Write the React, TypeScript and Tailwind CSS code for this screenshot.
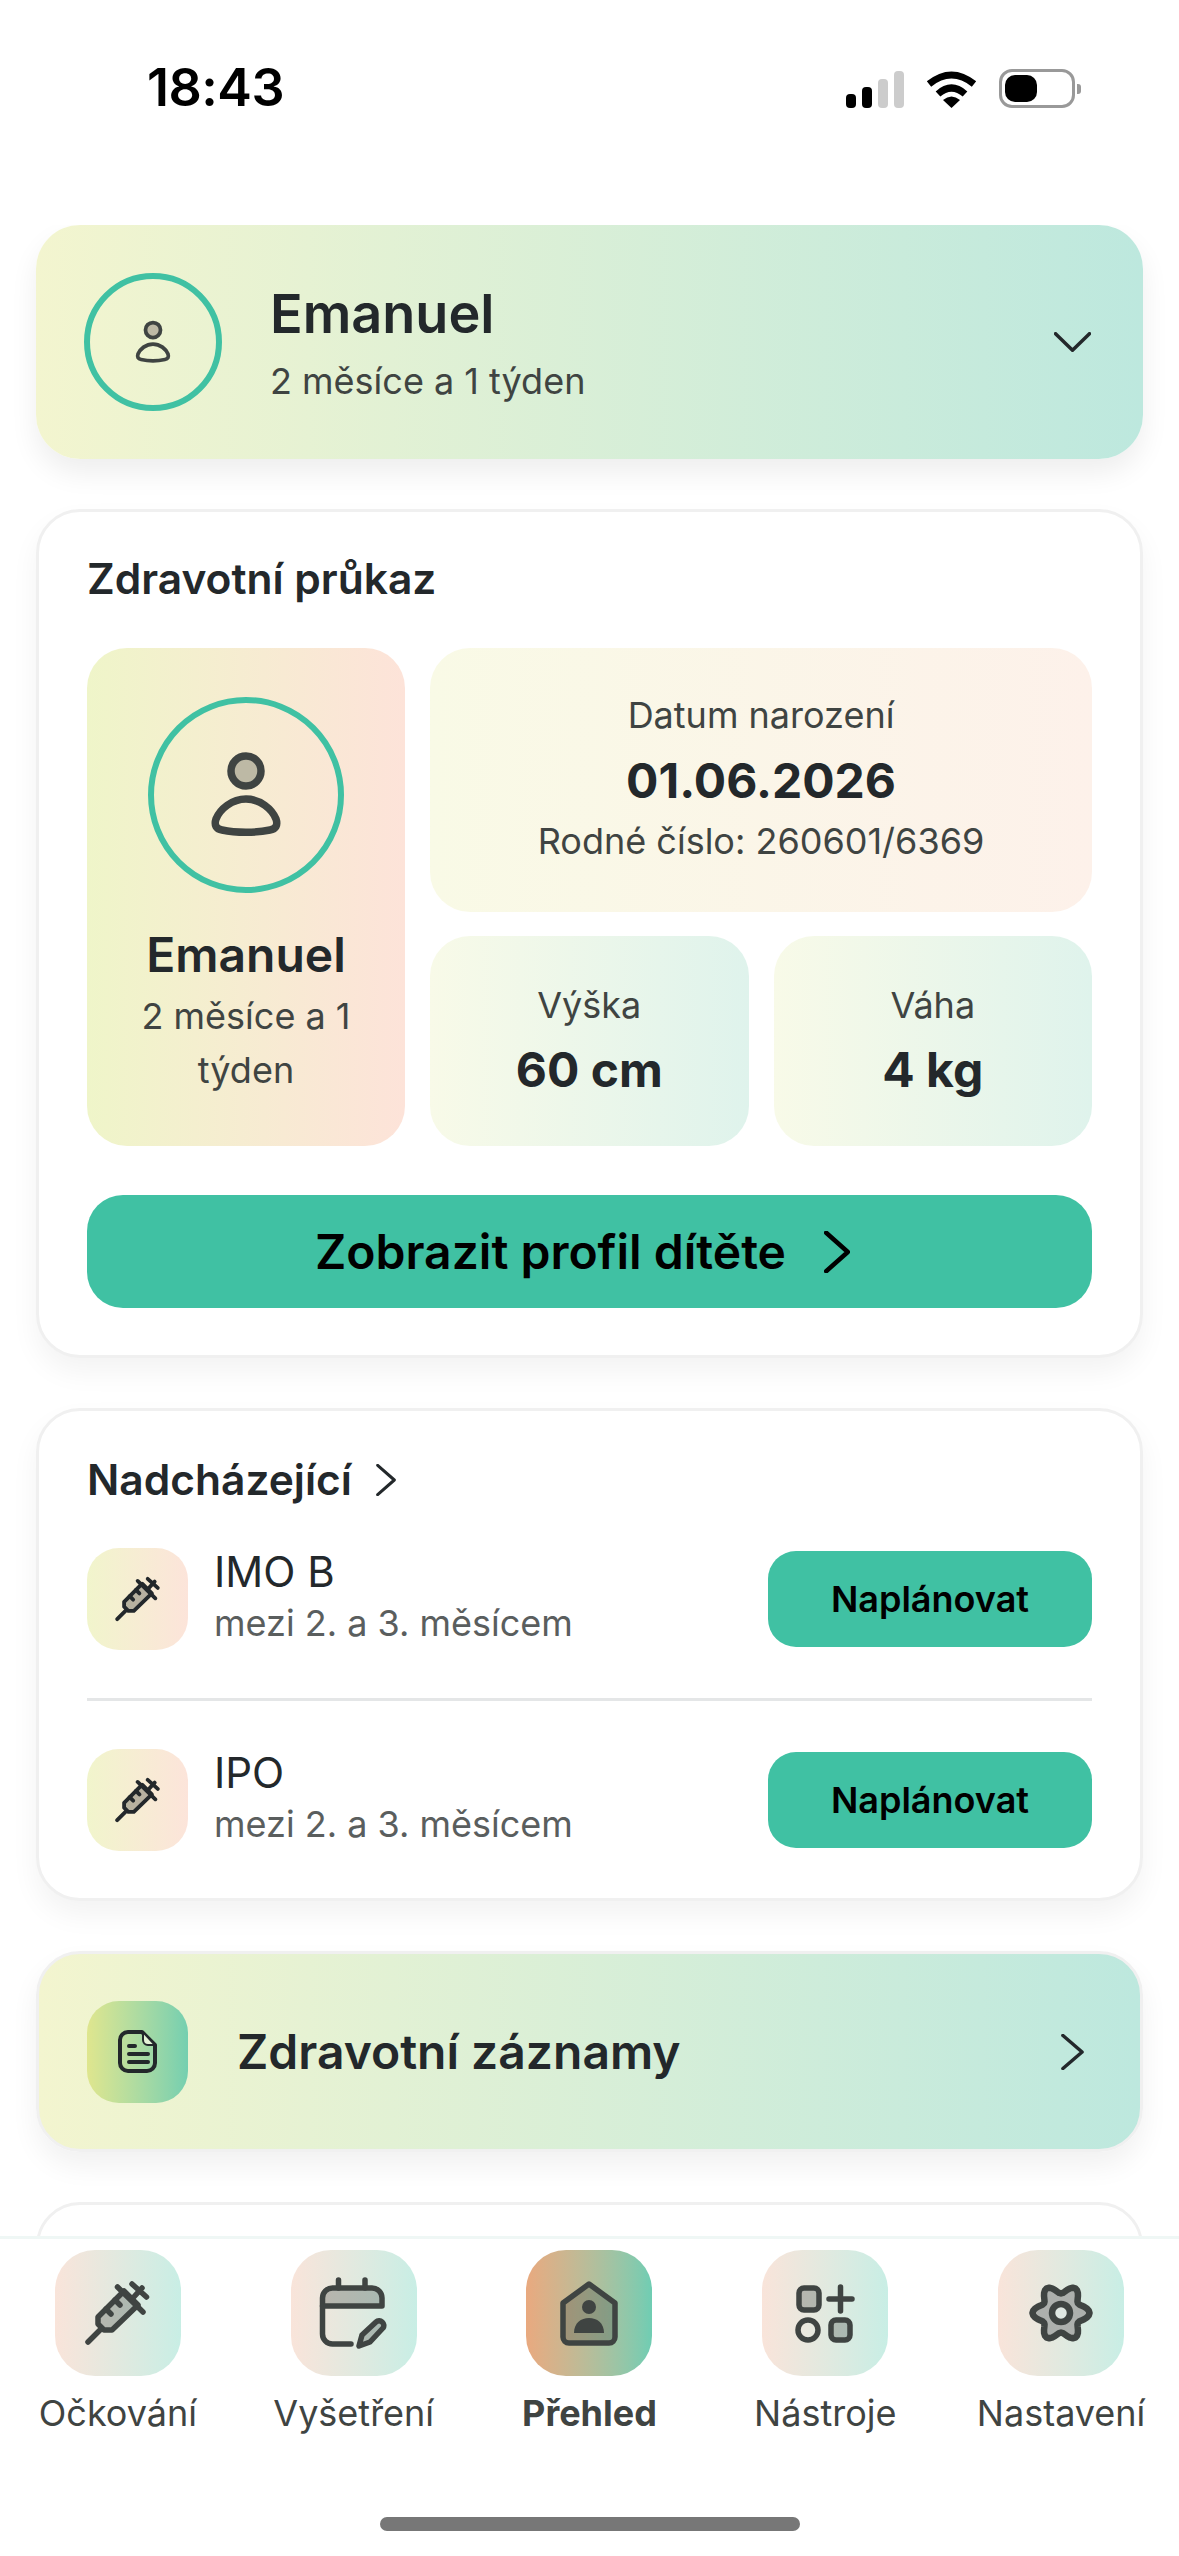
const ink = '#3f4442';

function Chevron({ dir = 'right', width = 3.5, className }: { dir?: 'right' | 'down'; width?: number; className?: string }) {
  return (
    <svg viewBox="0 0 24 24" className={className} fill="none" stroke="currentColor" strokeWidth={width} strokeLinecap="round" strokeLinejoin="round" preserveAspectRatio="none">
      <polyline vectorEffect="non-scaling-stroke" points={dir === 'down' ? '1,2 12,22 23,2' : '2,1 22,12 2,23'} />
    </svg>
  );
}

function PersonIcon({ size }: { size: number }) {
  return (
    <svg viewBox="0 0 96 96" width={size} height={size} fill="none" stroke={ink} strokeWidth="7.5">
      <circle cx="48" cy="24" r="15" fill="#bdb9a5" />
      <path d="M48 52 C62 52 74 62 78 72 C80 78 78 82 72 83 C58 86 38 86 24 83 C18 82 16 78 18 72 C22 62 34 52 48 52 Z" strokeLinejoin="round" />
    </svg>
  );
}

function SyringeIcon({ size, color = ink }: { size: number; color?: string }) {
  return (
    <svg viewBox="0 0 72 72" width={size} height={size} fill="none" stroke={color} strokeWidth="5.5" strokeLinecap="round" strokeLinejoin="round">
      <path d="M42 14 L56 28 L30 53 H22 L16 47 V40 Z" fill={color} fillOpacity="0.3" />
      <path d="M6 65 L19 52 M35.5 10 L61 35 M50 22 L60 11 M50 7 L64.5 20 M24 32 L29 37 M33 23 L38 28" />
    </svg>
  );
}

function CalendarPenIcon() {
  return (
    <svg viewBox="0 0 72 72" width="72" height="72" fill="none" stroke={ink} strokeWidth="5.5" strokeLinecap="round" strokeLinejoin="round">
      <path d="M4.5 29 V21 a10 10 0 0 1 10-10 H54 a10 10 0 0 1 10 10 V29 Z" fill={ink} fillOpacity="0.3" />
      <path d="M20.5 3 V11 M47 3 V11 M4.5 29 V57 a10 10 0 0 0 10 10 H33" />
      <path d="M41 69 L44 58 L58 45 C62 41 68 47 65 51 L52 65 Z" fill={ink} fillOpacity="0.3" />
    </svg>
  );
}

function HomeIcon() {
  return (
    <svg viewBox="0 0 72 72" width="72" height="72" fill="none" stroke={ink} strokeWidth="5.5" strokeLinejoin="round">
      <path d="M36 7 L62 26 V60 a6 6 0 0 1-6 6 H16 a6 6 0 0 1-6-6 V26 Z" fill={ink} fillOpacity="0.3" />
      <circle cx="36" cy="30" r="7" fill={ink} stroke="none" />
      <path d="M21 56 C21 46 28 41 36 41 C44 41 51 46 51 56 Z" fill={ink} stroke="none" />
    </svg>
  );
}

function ToolsIcon() {
  return (
    <svg viewBox="0 0 72 72" width="72" height="72" fill="none" stroke={ink} strokeWidth="5.5" strokeLinecap="round">
      <rect x="10" y="11" width="20" height="22" rx="5" fill={ink} fillOpacity="0.3" />
      <path d="M51.5 10 V34 M40 22 H63" />
      <circle cx="19" cy="53" r="10" />
      <rect x="42" y="43" width="19" height="20" rx="5" fill={ink} fillOpacity="0.3" />
    </svg>
  );
}

// six lobed gear outline, sampled around the centre
const gearPath =
  Array.from({ length: 72 }, (_, i) => {
    const a = (i * 5 * Math.PI) / 180;
    const r = 24 + 4.5 * Math.cos(6 * a);
    return `${i === 0 ? 'M' : 'L'}${(36 + r * Math.cos(a)).toFixed(2)} ${(36 + r * Math.sin(a)).toFixed(2)}`;
  }).join(' ') + ' Z';

function GearIcon() {
  return (
    <svg viewBox="0 0 72 72" width="72" height="72" fill="none" stroke={ink} strokeWidth="6.5" strokeLinejoin="round">
      <path d={gearPath} fill="#adb0ad" />
      <circle cx="36" cy="36" r="9" fill="#dfe7e2" />
    </svg>
  );
}

function DocIcon() {
  return (
    <svg viewBox="0 0 48 48" width="48" height="48" fill="none" stroke="#23282b" strokeWidth="4" strokeLinecap="round" strokeLinejoin="round">
      <path d="M14 4 H28 L41 17 V35 a8 8 0 0 1-8 8 H14 a8 8 0 0 1-8-8 V12 a8 8 0 0 1 8-8 Z" />
      <path d="M29 4 V12 a5 5 0 0 0 5 5 H41 Z" fill="#e4f3d6" strokeWidth="2" />
      <path d="M15 18 H21 M15 26 H34 M15 34 H34" />
    </svg>
  );
}

function StatusIcons() {
  return (
    <div className="flex items-end gap-[22px]">
      <div className="flex items-end gap-[6px]">
        <div className="w-[10px] h-[14px] rounded-[4px] bg-black" />
        <div className="w-[10px] h-[21px] rounded-[4px] bg-black" />
        <div className="w-[10px] h-[29px] rounded-[4px] bg-[#cccccc]" />
        <div className="w-[10px] h-[37px] rounded-[4px] bg-[#cccccc]" />
      </div>
      <svg viewBox="0 0 51 37" width="51" height="37" fill="none" stroke="black" strokeWidth="7">
        <path d="M3 13 Q25.5 -5 48 13" />
        <path d="M12 23 Q25.5 11 39 23" />
        <path d="M17 29 Q25.5 22 34 29 L25.5 37 Z" fill="black" stroke="none" />
      </svg>
      <div className="flex items-center gap-[2px]">
        <div className="w-[76px] h-[39px] rounded-[13px] border-[3px] border-[#999999] p-[3px] flex">
          <div className="w-[32px] h-full rounded-[10px] bg-black" />
        </div>
        <div className="w-[4px] h-[10px] rounded-r-[3px] bg-[#999999]" />
      </div>
    </div>
  );
}

const upcoming = [
  { name: 'IMO B', when: 'mezi 2. a 3. měsícem' },
  { name: 'IPO', when: 'mezi 2. a 3. měsícem' },
];

const navItems = [
  { label: 'Očkování', icon: <SyringeIcon size={72} /> },
  { label: 'Vyšetření', icon: <CalendarPenIcon /> },
  { label: 'Přehled', icon: <HomeIcon />, active: true },
  { label: 'Nástroje', icon: <ToolsIcon /> },
  { label: 'Nastavení', icon: <GearIcon /> },
];

export default function App() {
  return (
    <div className="w-[1179px] h-[2556px] bg-white flex flex-col overflow-hidden font-['Inter',sans-serif] text-[#23282b]">
      {/* Status bar */}
      <div className="h-[225px] shrink-0 flex items-start justify-between pl-[147px] pr-[98px] pt-[57px]">
        <span className="text-[52px] leading-[62px] font-semibold text-black tracking-[-0.5px]">18:43</span>
        <div className="pt-[12px]">
          <StatusIcons />
        </div>
      </div>

      {/* Scrolling content */}
      <div className="flex-1 min-h-0 overflow-hidden px-[36px] flex flex-col gap-[50px]">
        <div className="h-[234px] shrink-0 rounded-[44px] bg-linear-to-r from-[#f3f5cf] to-[#bde8de] shadow-[0_14px_28px_rgba(0,0,0,0.07)] flex items-center pl-[48px] pr-[52px]">
          <div className="w-[138px] h-[138px] rounded-full border-[6px] border-[#40c1a3] flex items-center justify-center">
            <PersonIcon size={48} />
          </div>
          <div className="ml-[48px] flex-1">
            <div className="text-[54px] leading-[66px] font-semibold">Emanuel</div>
            <div className="text-[36px] leading-[44px] mt-[12px] text-[#3f4442]">2 měsíce a 1 týden</div>
          </div>
          <Chevron dir="down" className="w-[37px] h-[20px]" />
        </div>

        <div className="h-[849px] shrink-0 rounded-[44px] bg-white border-[3px] border-[#f0f0f0] shadow-[0_14px_28px_rgba(0,0,0,0.05)] px-[48px] pt-[42px]">
          <h2 className="text-[42.5px] leading-[50px] font-semibold">Zdravotní průkaz</h2>
          <div className="mt-[44px] flex gap-[25px]">
            <div className="w-[318px] h-[498px] rounded-[40px] bg-linear-to-r from-[#eff5c9] to-[#fde3d9] flex flex-col items-center pt-[49px] px-[40px]">
              <div className="w-[196px] h-[196px] shrink-0 rounded-full border-[6px] border-[#40c1a3] flex items-center justify-center">
                <PersonIcon size={96} />
              </div>
              <div className="mt-[33px] text-[48px] leading-[58px] font-semibold">Emanuel</div>
              <div className="mt-[5px] text-[36px] leading-[54px] text-center text-[#3f4442]">2 měsíce a 1 týden</div>
            </div>
            <div className="flex-1 flex flex-col gap-[24px]">
              <div className="h-[264px] pb-[4px] rounded-[40px] bg-linear-to-r from-[#f9fae6] to-[#fdf1ea] flex flex-col items-center justify-center">
                <div className="text-[36px] leading-[44px] text-[#3f4442]">Datum narození</div>
                <div className="mt-[15px] text-[48px] leading-[58px] font-bold">01.06.2026</div>
                <div className="text-[36px] leading-[44px] mt-[9px] text-[#3f4442]">Rodné číslo: 260601/6369</div>
              </div>
              <div className="flex gap-[25px]">
                {[
                  { label: 'Výška', value: '60 cm' },
                  { label: 'Váha', value: '4 kg' },
                ].map((m) => (
                  <div key={m.label} className="flex-1 h-[210px] rounded-[40px] bg-linear-to-r from-[#f8fae8] to-[#dff3ec] flex flex-col items-center justify-center">
                    <div className="text-[36px] leading-[44px] text-[#3f4442]">{m.label}</div>
                    <div className="mt-[14px] text-[48px] leading-[58px] font-bold">{m.value}</div>
                  </div>
                ))}
              </div>
            </div>
          </div>
          <button className="mt-[49px] w-full h-[113px] pr-[14px] rounded-[36px] bg-[#40c1a3] flex items-center justify-center gap-[38px] text-[48px] font-semibold text-black">
            Zobrazit profil dítěte
            <Chevron width={4.5} className="w-[26px] h-[42px]" />
          </button>
        </div>

        <div className="h-[493px] shrink-0 rounded-[44px] bg-white border-[3px] border-[#f0f0f0] shadow-[0_14px_28px_rgba(0,0,0,0.05)] px-[48px] pt-[45px]">
          <div className="flex items-center gap-[24px] h-[48px]">
            <h2 className="text-[42.5px] leading-[48px] font-semibold">Nadcházející</h2>
            <Chevron width={3} className="w-[20px] h-[32px]" />
          </div>
          <div className="mt-[44px] flex flex-col">
            {upcoming.map((item, i) => (
              <div key={item.name} className={i > 0 ? 'mt-[48px] pt-[48px] border-t-[3px] border-[#e4e6e7]' : ''}>
                <div className="flex items-center h-[102px]">
                  <div className="w-[101px] h-[102px] rounded-[32px] bg-linear-to-r from-[#f1f5cc] to-[#fce4da] flex items-center justify-center">
                    <SyringeIcon size={50} color="#23282b" />
                  </div>
                  <div className="ml-[26px] flex-1 pb-[6px]">
                    <div className="text-[42px] leading-[50px]">{item.name}</div>
                    <div className="mt-[4px] text-[36px] leading-[44px] text-[#5a5e5e]">{item.when}</div>
                  </div>
                  <button className="w-[324px] h-[96px] rounded-[28px] bg-[#40c1a3] text-[36px] font-semibold text-black">Naplánovat</button>
                </div>
              </div>
            ))}
          </div>
        </div>

        <div className="h-[201px] shrink-0 rounded-[44px] border-[3px] border-[#f0f0f0] bg-linear-to-r from-[#f3f5cf] to-[#bde8de] shadow-[0_14px_28px_rgba(0,0,0,0.06)] flex items-center pl-[48px] pr-[56px]">
          <div className="w-[101px] h-[102px] rounded-[32px] bg-linear-to-r from-[#dfe68e] to-[#74cfb0] flex items-center justify-center">
            <DocIcon />
          </div>
          <div className="ml-[49px] flex-1 text-[48px] font-semibold">Zdravotní záznamy</div>
          <Chevron className="w-[23px] h-[36px]" />
        </div>

        <div className="h-[300px] shrink-0 rounded-[44px] bg-white border-[3px] border-[#f0f0f0]" />
      </div>

      {/* Bottom navigation */}
      <div className="h-[320px] shrink-0 bg-white border-t-[3px] border-[#eff7f5] flex flex-col">
        <div className="grid grid-cols-5 pt-[11px]">
          {navItems.map((item) => (
            <div key={item.label} className="flex flex-col items-center">
              <div className={`w-[126px] h-[126px] rounded-[40px] flex items-center justify-center bg-linear-to-r ${item.active ? 'from-[#e9a97f] to-[#6fcdb3]' : 'from-[#f9e4da] to-[#c8eee5]'}`}>
                {item.icon}
              </div>
              <span className={`mt-[15px] text-[36px] leading-[44px] text-[#3f4442] whitespace-nowrap ${item.active ? 'font-bold' : ''}`}>{item.label}</span>
            </div>
          ))}
        </div>
        <div className="mt-auto mb-[25px] mx-auto w-[420px] h-[14px] rounded-full bg-[#777777]" />
      </div>
    </div>
  );
}
